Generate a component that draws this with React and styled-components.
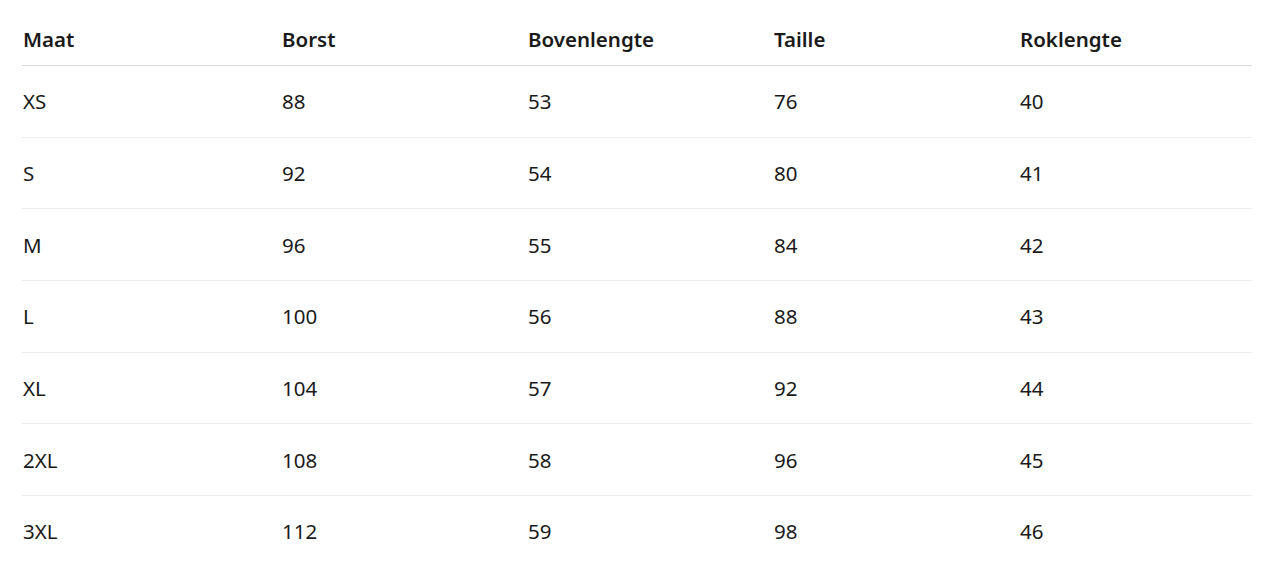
import React from 'react'
import styled, { createGlobalStyle } from 'styled-components'

const GlobalStyle = createGlobalStyle`
body{
margin:0;
background:#fff;
font-family:"Noto Sans","Open Sans",Arial,sans-serif;
color:#1a1a1a;
}
`
const Wrapper = styled.div`
padding:16px 16px 0 22px;
`
const Table = styled.table`
width:1230px;
border-collapse:collapse;
table-layout:fixed;
`
const Head = styled.th`
text-align:left;
font-weight:600;
font-size:20.5px;
height:45px;
padding:0 0 4px 1px;
border-bottom:1px solid #d9d9d9;
vertical-align:middle;
`
const Row = styled.tr`
border-bottom:1px solid ${p => p.last ? 'transparent' : '#ececec'};
`
const Cell = styled.td`
font-size:20.5px;
height:70.67px;
padding:0 0 0 1px;
vertical-align:middle;
`

const columns = [
    { name: 'Maat', width: 259 },
    { name: 'Borst', width: 246 },
    { name: 'Bovenlengte', width: 246 },
    { name: 'Taille', width: 246 },
    { name: 'Roklengte', width: 233 },
]

const rows = [
    ['XS', 88, 53, 76, 40],
    ['S', 92, 54, 80, 41],
    ['M', 96, 55, 84, 42],
    ['L', 100, 56, 88, 43],
    ['XL', 104, 57, 92, 44],
    ['2XL', 108, 58, 96, 45],
    ['3XL', 112, 59, 98, 46],
]

const App = () => {
    return (
        <>
            <GlobalStyle />
            <Wrapper>
                <Table>
                    <colgroup>
                        {columns.map(c => <col key={c.name} width={c.width} />)}
                    </colgroup>
                    <thead>
                        <tr>
                            {columns.map(c => <Head key={c.name}>{c.name}</Head>)}
                        </tr>
                    </thead>
                    <tbody>
                        {rows.map((r, i) => (
                            <Row key={r[0]} last={i === rows.length - 1}>
                                {r.map((v, j) => <Cell key={j}>{v}</Cell>)}
                            </Row>
                        ))}
                    </tbody>
                </Table>
            </Wrapper>
        </>
    );
};
export default App;
